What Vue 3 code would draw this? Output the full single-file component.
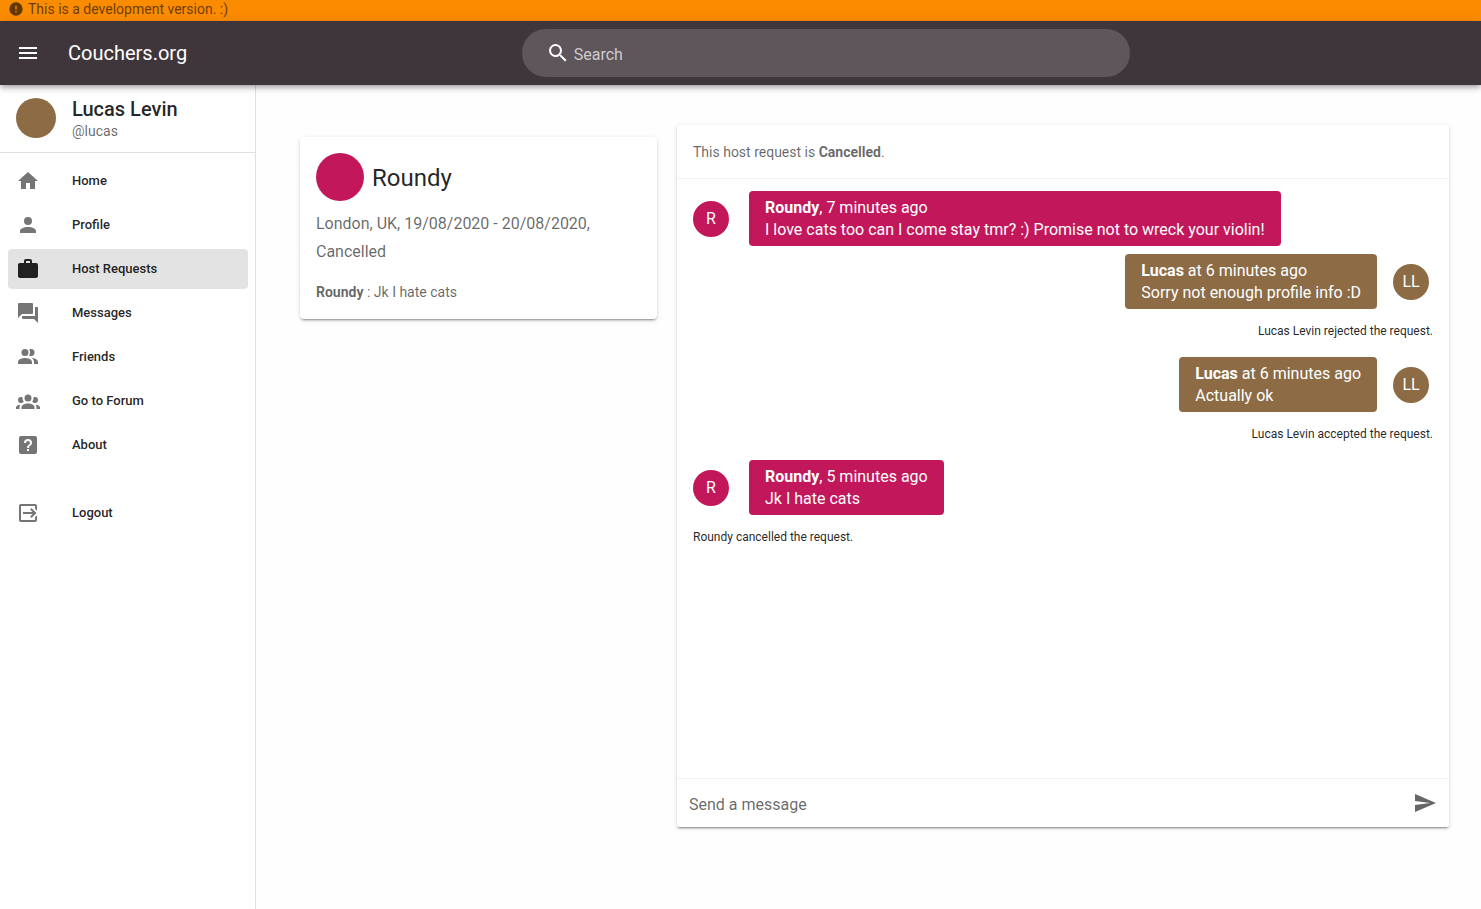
<script setup>
import { ref } from 'vue'

const icons = {
  alert: 'M13,13H11V7H13M13,17H11V15H13M12,2A10,10 0 0,0 2,12A10,10 0 0,0 12,22A10,10 0 0,0 22,12A10,10 0 0,0 12,2Z',
  menu: 'M3,6H21V8H3V6M3,11H21V13H3V11M3,16H21V18H3V16Z',
  search: 'M9.5,3A6.5,6.5 0 0,1 16,9.5C16,11.11 15.41,12.59 14.44,13.73L14.71,14H15.5L20.5,19L19,20.5L14,15.5V14.71L13.73,14.44C12.59,15.41 11.11,16 9.5,16A6.5,6.5 0 0,1 3,9.5A6.5,6.5 0 0,1 9.5,3M9.5,5C7,5 5,7 5,9.5C5,12 7,14 9.5,14C12,14 14,12 14,9.5C14,7 12,5 9.5,5Z',
  send: 'M2,21L23,12L2,3V10L17,12L2,14V21Z',
}

const links = [
  { label: 'Home', path: 'M10,20V14H14V20H19V12H22L12,3L2,12H5V20H10Z' },
  { label: 'Profile', path: 'M12,4A4,4 0 0,1 16,8A4,4 0 0,1 12,12A4,4 0 0,1 8,8A4,4 0 0,1 12,4M12,14C16.42,14 20,15.79 20,18V20H4V18C4,15.79 7.58,14 12,14Z' },
  { label: 'Host Requests', active: true, path: 'M10,2H14A2,2 0 0,1 16,4V6H20A2,2 0 0,1 22,8V19A2,2 0 0,1 20,21H4C2.89,21 2,20.1 2,19V8C2,6.89 2.89,6 4,6H8V4C8,2.89 8.89,2 10,2M14,6V4H10V6H14Z' },
  { label: 'Messages', path: 'M17,12V3A1,1 0 0,0 16,2H3A1,1 0 0,0 2,3V17L6,13H16A1,1 0 0,0 17,12M21,6H19V15H6V17A1,1 0 0,0 7,18H18L22,22V7A1,1 0 0,0 21,6Z' },
  { label: 'Friends', path: 'M16 17V19H2V17S2 13 9 13 16 17 16 17M12.5 7.5A3.5 3.5 0 1 0 9 11A3.5 3.5 0 0 0 12.5 7.5M15.94 13A5.32 5.32 0 0 1 18 17V19H22V17S22 13.37 15.94 13M15 4A3.39 3.39 0 0 0 13.07 4.59A5 5 0 0 1 13.07 10.41A3.39 3.39 0 0 0 15 11A3.5 3.5 0 0 0 15 4Z' },
  { label: 'Go to Forum', path: 'M12,5.5A3.5,3.5 0 0,1 15.5,9A3.5,3.5 0 0,1 12,12.5A3.5,3.5 0 0,1 8.5,9A3.5,3.5 0 0,1 12,5.5M5,8C5.56,8 6.08,8.15 6.53,8.42C6.38,9.85 6.8,11.27 7.66,12.38C7.16,13.34 6.16,14 5,14A3,3 0 0,1 2,11A3,3 0 0,1 5,8M19,8A3,3 0 0,1 22,11A3,3 0 0,1 19,14C17.84,14 16.84,13.34 16.34,12.38C17.2,11.27 17.62,9.85 17.47,8.42C17.92,8.15 18.44,8 19,8M5.5,18.25C5.5,16.18 8.41,14.5 12,14.5C15.59,14.5 18.5,16.18 18.5,18.25V20H5.5V18.25M0,20V18.5C0,17.11 1.89,15.94 4.45,15.6C3.86,16.28 3.5,17.22 3.5,18.25V20H0M24,20H20.5V18.25C20.5,17.22 20.14,16.28 19.55,15.6C22.11,15.94 24,17.11 24,18.5V20Z' },
  { label: 'About', path: 'M11,18H13V16H11V18M12,6A4,4 0 0,0 8,10H10A2,2 0 0,1 12,8A2,2 0 0,1 14,10C14,12 11,11.75 11,15H13C13,12.75 16,12.5 16,10A4,4 0 0,0 12,6M5,3H19A2,2 0 0,1 21,5V19A2,2 0 0,1 19,21H5A2,2 0 0,1 3,19V5A2,2 0 0,1 5,3Z' },
  { label: 'Logout', apart: true, path: 'M14.08,15.59L16.67,13H7V11H16.67L14.08,8.41L15.5,7L20.5,12L15.5,17L14.08,15.59M19,3A2,2 0 0,1 21,5V9.67L19,7.67V5H5V19H19V16.33L21,14.33V19A2,2 0 0,1 19,21H5C3.89,21 3,20.1 3,19V5C3,3.89 3.89,3 5,3H19Z' },
]

const thread = [
  { type: 'message', initials: 'R', name: 'Roundy', time: ', 7 minutes ago', text: 'I love cats too can I come stay tmr? :) Promise not to wreck your violin!' },
  { type: 'message', own: true, initials: 'LL', name: 'Lucas', time: ' at 6 minutes ago', text: 'Sorry not enough profile info :D' },
  { type: 'status', own: true, text: 'Lucas Levin rejected the request.' },
  { type: 'message', own: true, initials: 'LL', name: 'Lucas', time: ' at 6 minutes ago', text: 'Actually ok' },
  { type: 'status', own: true, text: 'Lucas Levin accepted the request.' },
  { type: 'message', initials: 'R', name: 'Roundy', time: ', 5 minutes ago', text: 'Jk I hate cats' },
  { type: 'status', text: 'Roundy cancelled the request.' },
]

const query = ref('')
const draft = ref('')
</script>

<template>
  <div class="app">
    <div class="banner">
      <svg class="banner-icon" viewBox="0 0 24 24" aria-hidden="true"><path :d="icons.alert" /></svg>
      <span>This is a development version. :)</span>
    </div>

    <header class="topbar">
      <button class="icon-button menu" type="button" aria-label="Menu">
        <svg class="icon" viewBox="0 0 24 24"><path :d="icons.menu" /></svg>
      </button>
      <div class="brand">Couchers.org</div>
      <label class="search">
        <svg class="icon" viewBox="0 0 24 24" aria-hidden="true"><path :d="icons.search" /></svg>
        <input v-model="query" type="text" placeholder="Search" aria-label="Search" />
      </label>
    </header>

    <div class="body">
      <aside class="sidebar">
        <div class="user">
          <span class="user-avatar"></span>
          <div class="user-text">
            <div class="user-name">Lucas Levin</div>
            <div class="user-handle">@lucas</div>
          </div>
        </div>
        <nav class="nav">
          <a
            v-for="link in links"
            :key="link.label"
            href="#"
            class="nav-link"
            :class="{ active: link.active, apart: link.apart }"
          >
            <svg class="icon" viewBox="0 0 24 24" aria-hidden="true"><path :d="link.path" /></svg>
            <span class="nav-label">{{ link.label }}</span>
          </a>
        </nav>
      </aside>

      <main class="content">
        <section class="card request">
          <div class="request-head">
            <span class="request-avatar"></span>
            <h2>Roundy</h2>
          </div>
          <p class="request-info">London, UK, 19/08/2020 - 20/08/2020, Cancelled</p>
          <p class="request-last"><b>Roundy</b> : Jk I hate cats</p>
        </section>

        <section class="card chat">
          <p class="chat-status">This host request is <b>Cancelled</b>.</p>
          <div class="thread">
            <template v-for="(item, i) in thread" :key="i">
              <div v-if="item.type === 'message'" class="message" :class="{ own: item.own }">
                <span class="avatar">{{ item.initials }}</span>
                <div class="bubble">
                  <div><b>{{ item.name }}</b>{{ item.time }}</div>
                  <div>{{ item.text }}</div>
                </div>
              </div>
              <p v-else class="status" :class="{ own: item.own }">{{ item.text }}</p>
            </template>
          </div>
          <form class="composer" @submit.prevent>
            <input v-model="draft" type="text" placeholder="Send a message" aria-label="Send a message" />
            <button class="icon-button" type="submit" aria-label="Send">
              <svg class="icon" viewBox="0 0 24 24"><path :d="icons.send" /></svg>
            </button>
          </form>
        </section>
      </main>
    </div>
  </div>
</template>

<style>
body {
  margin: 0;
  background: #fefefe;
}
</style>

<style scoped>
.app {
  display: flex;
  flex-direction: column;
  min-height: 100vh;
  font-family: Roboto, "Liberation Sans", sans-serif;
  font-size: 16px;
  color: rgba(0, 0, 0, 0.87);
}

.app * {
  box-sizing: border-box;
}

h2,
p {
  margin: 0;
  font-weight: 400;
}

b {
  font-weight: 700;
}

input {
  flex: 1;
  min-width: 0;
  padding: 2px 0 0;
  border: 0;
  outline: 0;
  background: transparent;
  color: inherit;
  font: inherit;
}

.icon {
  flex: none;
  display: block;
  width: 24px;
  height: 24px;
  fill: currentColor;
}

.icon-button {
  display: flex;
  padding: 0;
  border: 0;
  background: transparent;
  color: inherit;
  cursor: pointer;
}

.banner {
  display: flex;
  align-items: center;
  gap: 4px;
  height: 21px;
  padding: 0 8px 3px;
  background: #fb8c00;
  color: rgba(0, 0, 0, 0.6);
  font-size: 14px;
  line-height: 18px;
}

.banner-icon {
  width: 16px;
  height: 16px;
  fill: currentColor;
}

.topbar {
  position: relative;
  display: flex;
  align-items: center;
  height: 64px;
  padding: 0 16px;
  background: #3f363b;
  color: #fff;
  box-shadow: 0 2px 4px -1px rgba(0, 0, 0, 0.2), 0 4px 5px rgba(0, 0, 0, 0.14), 0 1px 10px rgba(0, 0, 0, 0.12);
}

.brand {
  padding-left: 28px;
  font-size: 20px;
  line-height: 30px;
}

.search {
  display: flex;
  align-items: center;
  gap: 4px;
  width: 42%;
  height: 48px;
  margin: 0 auto;
  padding: 0 24px;
  border-radius: 24px;
  background: #5f565b;
}

.search input::placeholder {
  color: rgba(255, 255, 255, 0.7);
  opacity: 1;
}

.body {
  display: flex;
  flex: 1;
}

.sidebar {
  flex: none;
  width: 256px;
  border-right: 1px solid #e0e0e0;
  background: #fff;
}

.user {
  display: flex;
  align-items: center;
  gap: 16px;
  height: 68px;
  padding: 0 16px 1px;
  border-bottom: 1px solid #e0e0e0;
}

.user-avatar {
  width: 40px;
  height: 40px;
  border-radius: 50%;
  background: #8c6b45;
}

.user-text {
  padding-top: 2px;
}

.user-name {
  font-size: 20px;
  font-weight: 500;
  line-height: 24px;
}

.user-handle {
  color: rgba(0, 0, 0, 0.6);
  font-size: 14px;
  line-height: 20px;
}

.nav {
  display: flex;
  flex-direction: column;
  gap: 4px;
  padding: 8px 7px 8px 8px;
}

.nav-link {
  display: flex;
  align-items: center;
  gap: 32px;
  height: 40px;
  padding: 0 8px;
  border-radius: 4px;
  color: rgba(0, 0, 0, 0.87);
  font-size: 13px;
  font-weight: 500;
  text-decoration: none;
}

.nav-label {
  padding-bottom: 2px;
}

.nav-link .icon {
  color: #757575;
}

.nav-link.active {
  background: #e3e3e3;
}

.nav-link.active .icon {
  color: #212121;
}

.nav-link.apart {
  margin-top: 24px;
}

.content {
  display: grid;
  flex: 1;
  grid-template-columns: 357fr 772fr;
  gap: 20px;
  padding: 40px 32px 82px 44px;
}

.card {
  border-radius: 4px;
  background: #fff;
  box-shadow: 0 3px 1px -2px rgba(0, 0, 0, 0.2), 0 2px 2px rgba(0, 0, 0, 0.14), 0 1px 5px rgba(0, 0, 0, 0.12);
}

.request {
  align-self: start;
  margin-top: 12px;
  padding: 16px;
}

.request-head {
  display: flex;
  align-items: center;
  gap: 8px;
}

.request-avatar {
  width: 48px;
  height: 48px;
  border-radius: 50%;
  background: #c2185b;
}

.request h2 {
  padding-top: 2px;
  font-size: 24px;
  line-height: 32px;
}

.request-info {
  margin-top: 9px;
  color: rgba(0, 0, 0, 0.6);
  line-height: 28px;
}

.request-last {
  margin-top: 15px;
  color: rgba(0, 0, 0, 0.6);
  font-size: 14px;
  line-height: 22px;
}

.chat {
  display: flex;
  flex-direction: column;
  border-radius: 2px;
}

.chat-status {
  padding: 16px 16px 15px;
  border-bottom: 1px solid #f2f2f2;
  color: rgba(0, 0, 0, 0.6);
  font-size: 14px;
  line-height: 22px;
}

.thread {
  flex: 1;
  padding: 12px 16px;
}

.message {
  display: flex;
  align-items: center;
  gap: 20px;
}

.message.own {
  flex-direction: row-reverse;
  gap: 16px;
  padding-right: 4px;
}

.message + .message {
  margin-top: 8px;
}

.avatar {
  flex: none;
  width: 36px;
  border-radius: 50%;
  background: #c2185b;
  color: #fff;
  line-height: 36px;
  text-align: center;
}

.bubble {
  padding: 6px 16px 5px;
  border-radius: 4px;
  background: #c2185b;
  color: #fff;
  line-height: 22px;
}

.own .avatar,
.own .bubble {
  background: #8c6b45;
}

.status {
  margin: 12px 0 16px;
  font-size: 12px;
  line-height: 20px;
}

.status.own {
  text-align: right;
}

.composer {
  display: flex;
  align-items: center;
  height: 49px;
  padding: 0 12px;
  border-top: 1px solid #f2f2f2;
  color: rgba(0, 0, 0, 0.6);
}

.composer input::placeholder {
  color: rgba(0, 0, 0, 0.6);
  opacity: 1;
}
</style>
